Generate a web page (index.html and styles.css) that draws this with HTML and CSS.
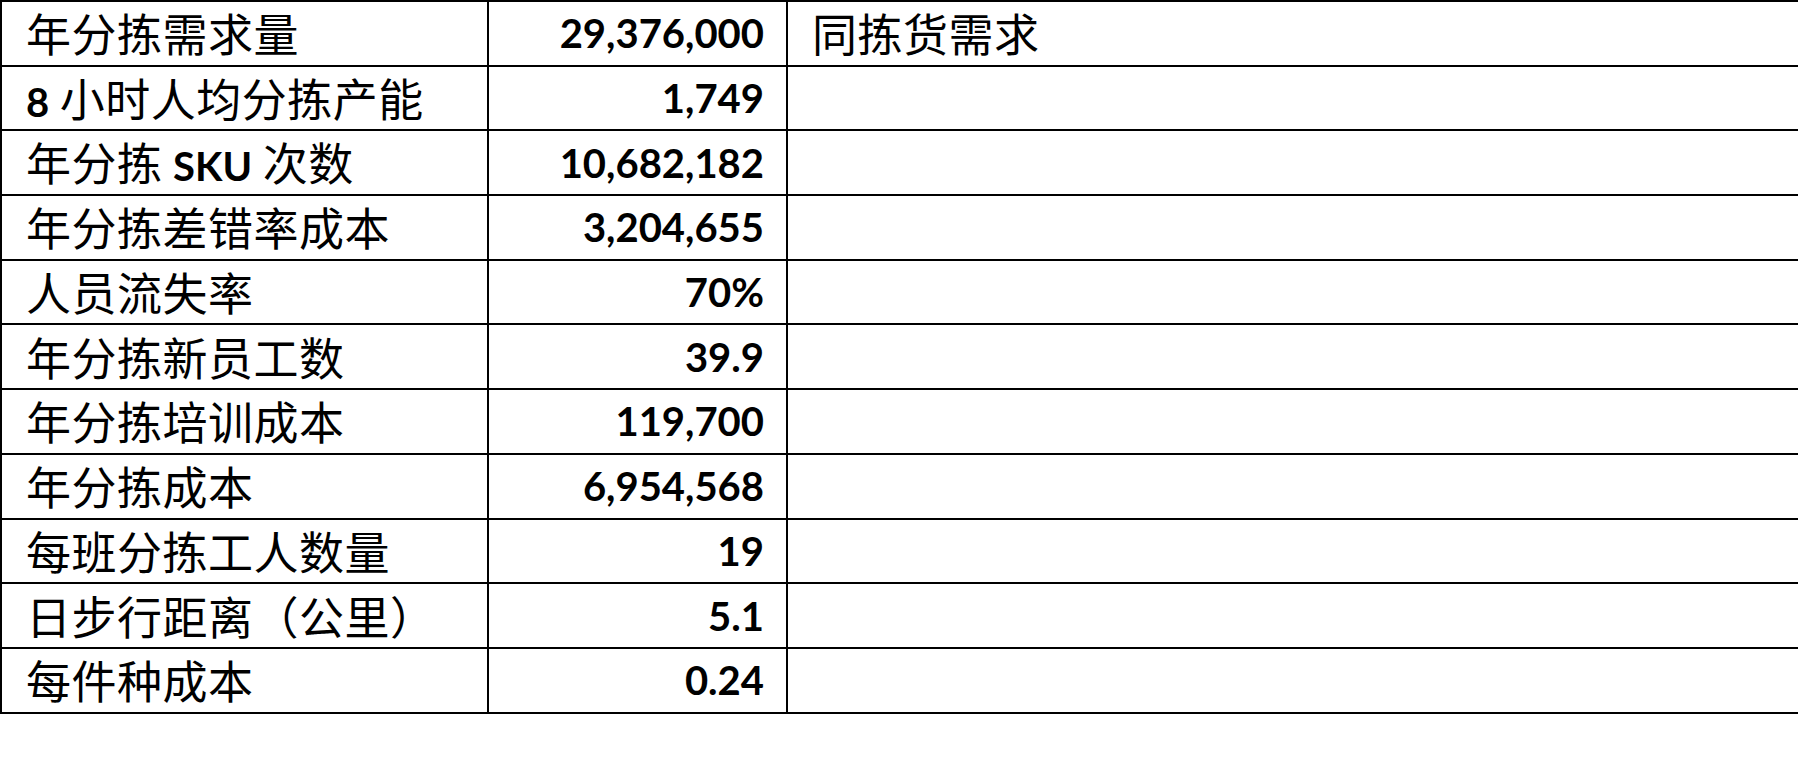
FILE: index.html
```html
<!DOCTYPE html>
<html lang="zh">
<head>
<meta charset="utf-8">
<link rel="stylesheet" href="styles.css">
</head>
<body>
<table class="sheet">
  <colgroup><col class="c1"><col class="c2"><col class="c3"></colgroup>
  <tr><td class="label">年分拣需求量</td><td class="num">29,376,000</td><td class="note">同拣货需求</td></tr>
  <tr><td class="label"><span class="lat">8</span> 小时人均分拣产能</td><td class="num">1,749</td><td class="note"></td></tr>
  <tr><td class="label">年分拣 <span class="lat">SKU</span> 次数</td><td class="num">10,682,182</td><td class="note"></td></tr>
  <tr><td class="label">年分拣差错率成本</td><td class="num">3,204,655</td><td class="note"></td></tr>
  <tr><td class="label">人员流失率</td><td class="num">70%</td><td class="note"></td></tr>
  <tr><td class="label">年分拣新员工数</td><td class="num">39.9</td><td class="note"></td></tr>
  <tr><td class="label">年分拣培训成本</td><td class="num">119,700</td><td class="note"></td></tr>
  <tr><td class="label">年分拣成本</td><td class="num">6,954,568</td><td class="note"></td></tr>
  <tr><td class="label">每班分拣工人数量</td><td class="num">19</td><td class="note"></td></tr>
  <tr><td class="label">日步行距离（公里）</td><td class="num">5.1</td><td class="note"></td></tr>
  <tr><td class="label">每件种成本</td><td class="num">0.24</td><td class="note"></td></tr>
</table>
</body>
</html>
```

FILE: styles.css
```css
html, body {
  margin: 0;
  padding: 0;
  background: #fff;
  overflow: hidden;
}
body {
  width: 1798px;
  height: 774px;
  color: #000;
  font-family: "Noto Sans CJK SC", "Noto Sans", sans-serif;
}
.sheet {
  border-collapse: collapse;
  table-layout: fixed;
  width: 1840px;
}
.c1 { width: 487px; }
.c2 { width: 299px; }
.c3 { width: 1054px; }
.sheet td {
  border: 2px solid #000;
  height: 64.7px;
  padding: 0;
  box-sizing: border-box;
  vertical-align: middle;
  white-space: nowrap;
  line-height: 1.2;
}
.label, .note {
  font-size: 45px;
  font-weight: 400;
  padding-left: 24px !important;
  letter-spacing: 0.5px;
}
.lat {
  font-family: "Lato", "Noto Sans", sans-serif;
  font-weight: 700;
  font-size: 40px;
  letter-spacing: 0;
}
.num {
  font-family: "Lato", "Noto Sans", sans-serif;
  font-weight: 700;
  font-size: 40px;
  text-align: right;
  padding-right: 22px !important;
}
```
